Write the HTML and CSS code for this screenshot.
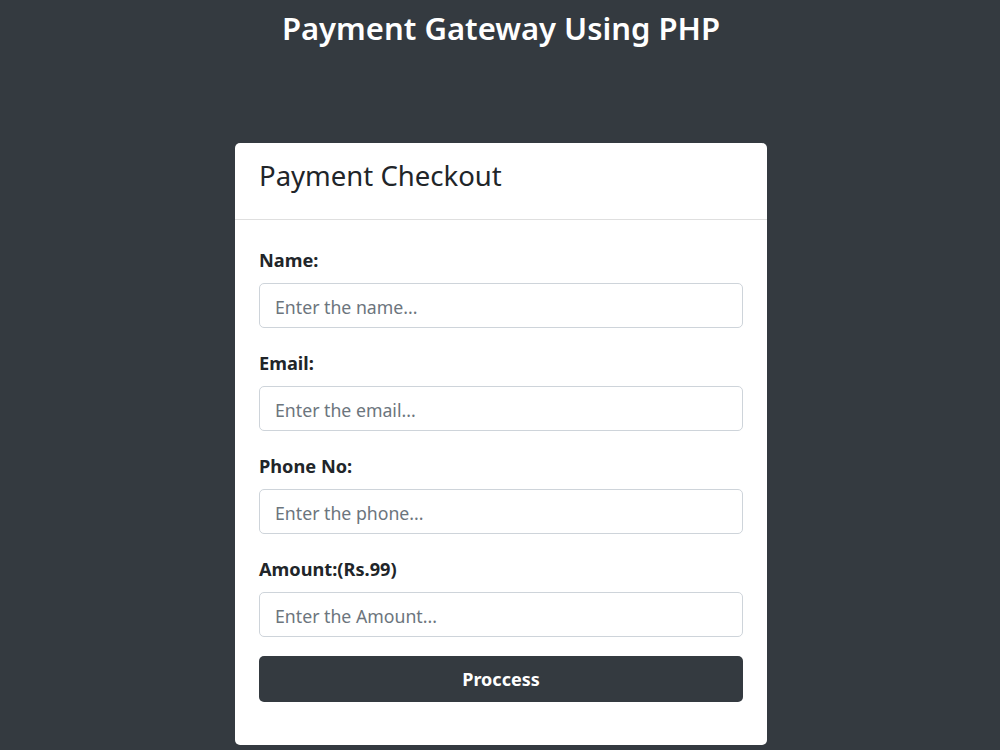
FILE: index.html
```html
<!DOCTYPE html>
<html>
<head>
<meta charset="utf-8">
<title>Payment Gateway Using PHP</title>
<link rel="stylesheet" href="styles.css">
</head>
<body>
<h1 class="title">Payment Gateway Using PHP</h1>
<div class="card">
  <div class="card-header">Payment Checkout</div>
  <form class="card-body">
    <div class="group">
      <label>Name:</label>
      <input type="text" placeholder="Enter the name...">
    </div>
    <div class="group">
      <label>Email:</label>
      <input type="text" placeholder="Enter the email...">
    </div>
    <div class="group">
      <label>Phone No:</label>
      <input type="text" placeholder="Enter the phone...">
    </div>
    <div class="group last">
      <label>Amount:(Rs.99)</label>
      <input type="text" placeholder="Enter the Amount...">
    </div>
    <button type="button" class="btn">Proccess</button>
  </form>
</div>
</body>
</html>
```
FILE: styles.css
```css
* { box-sizing: border-box; }
html, body { height: 100%; }
body {
  margin: 0;
  padding-left: 2px;
  background: #343a40;
  font-family: "Noto Sans", "Open Sans", sans-serif;
  color: #212529;
  overflow: hidden;
}
.title {
  margin: 0;
  padding-top: 6px;
  line-height: 44px;
  font-size: 31px;
  font-weight: 600;
  color: #fff;
  text-align: center;
}
.card {
  width: 532px;
  margin: 93px auto 0;
  background: #fff;
  border-radius: 5px;
}
.card-header {
  height: 77px;
  padding: 0 24px 11px;
  display: flex;
  align-items: center;
  font-size: 27.5px;
  border-bottom: 1px solid #dfdfdf;
}
.card-body {
  display: block;
  padding: 28px 24px 43px;
}
.group { margin-bottom: 23px; }
.group.last { margin-bottom: 19px; }
.group label {
  display: block;
  font-size: 18.2px;
  font-weight: 700;
  line-height: 25px;
  margin-bottom: 10px;
}
.group input {
  display: block;
  width: 100%;
  height: 45px;
  padding: 2px 15px 0;
  border: 1px solid #ced4da;
  border-radius: 5px;
  font-family: inherit;
  font-size: 17.7px;
  color: #212529;
  background: #fff;
}
.group input::placeholder { color: #6c757d; }
.btn {
  display: block;
  width: 100%;
  height: 46px;
  border: 0;
  border-radius: 5px;
  background: #343a40;
  color: #fff;
  font-family: inherit;
  font-size: 18px;
  font-weight: 700;
}
```
